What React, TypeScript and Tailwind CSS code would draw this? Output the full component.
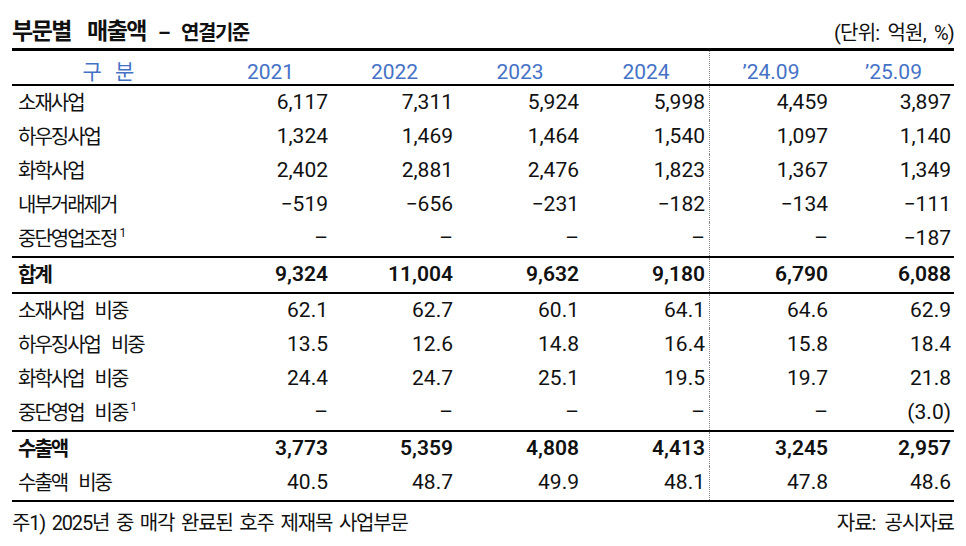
import React from "react";

type Row = {
  label: string;
  sup?: boolean;
  values: string[];
  bold?: boolean;
  topLine?: boolean;
};

const years = ["2021", "2022", "2023", "2024", "\u201924.09", "\u201925.09"];

const rows: Row[] = [
  { label: "소재사업", values: ["6,117", "7,311", "5,924", "5,998", "4,459", "3,897"] },
  { label: "하우징사업", values: ["1,324", "1,469", "1,464", "1,540", "1,097", "1,140"] },
  { label: "화학사업", values: ["2,402", "2,881", "2,476", "1,823", "1,367", "1,349"] },
  { label: "내부거래제거", values: ["\u2212519", "\u2212656", "\u2212231", "\u2212182", "\u2212134", "\u2212111"] },
  { label: "중단영업조정", sup: true, values: ["\u2013", "\u2013", "\u2013", "\u2013", "\u2013", "\u2212187"] },
  { label: "합계", bold: true, topLine: true, values: ["9,324", "11,004", "9,632", "9,180", "6,790", "6,088"] },
  { label: "소재사업 비중", topLine: true, values: ["62.1", "62.7", "60.1", "64.1", "64.6", "62.9"] },
  { label: "하우징사업 비중", values: ["13.5", "12.6", "14.8", "16.4", "15.8", "18.4"] },
  { label: "화학사업 비중", values: ["24.4", "24.7", "25.1", "19.5", "19.7", "21.8"] },
  { label: "중단영업 비중", sup: true, values: ["\u2013", "\u2013", "\u2013", "\u2013", "\u2013", "(3.0)"] },
  { label: "수출액", bold: true, topLine: true, values: ["3,773", "5,359", "4,808", "4,413", "3,245", "2,957"] },
  { label: "수출액 비중", values: ["40.5", "48.7", "49.9", "48.1", "47.8", "48.6"] },
];

const font = "font-['Roboto','Noto_Sans_CJK_KR',sans-serif]";
const grid = "grid grid-cols-[197px_123px_125px_126px_126px_123px_123px]";

function Cell({ i, children, className = "" }: { i: number; children: React.ReactNode; className?: string }) {
  return (
    <div
      className={`flex items-center justify-end pr-[4px] ${
        i === 4 ? "border-l border-dotted border-[#8a8a8a]" : ""
      } ${className}`}
    >
      {children}
    </div>
  );
}

export default function App() {
  return (
    <div className={`w-[966px] h-[546px] bg-white text-[#111] ${font}`}>
      <div className="px-[12px] pt-[14px]">
        <div className="flex items-end justify-between h-[34px]">
          <div className="flex items-end font-bold tracking-[-1.5px] pb-[5px]">
            <span className="text-[23px] leading-none">부문별</span>
            <span className="text-[23px] leading-none ml-[16px]">매출액</span>
            <span className="text-[20px] leading-none ml-[12px]">–</span>
            <span className="text-[20px] leading-none ml-[12px]">연결기준</span>
          </div>
          <div className="text-[20px] leading-none tracking-[-0.8px] [word-spacing:4px] pb-[5px]">(단위: 억원, %)</div>
        </div>

        <div className="border-t-[3px] border-black">
          <div className={`${grid} h-[35px] border-b-2 border-black text-[#4672c6] text-[21px]`}>
            <div className="flex items-end justify-center pb-[1px] leading-none tracking-[4px] text-[21px]">구 분</div>
            {years.map((y, i) => (
              <div
                key={y}
                className={`flex items-end justify-center pb-[1px] leading-none ${
                  i === 4 ? "border-l border-dotted border-[#8a8a8a]" : ""
                }`}
              >
                {y}
              </div>
            ))}
          </div>

          {rows.map((r) => (
            <div
              key={r.label}
              className={`${grid} ${r.topLine ? "h-[36px] border-t-2 border-black" : "h-[34px]"}`}
            >
              <div
                className={`flex items-center pl-[6px] text-[20px] tracking-[-2px] [word-spacing:8px] ${
                  r.bold ? "font-bold" : ""
                }`}
              >
                {r.label}
                {r.sup && <sup className="text-[12px] ml-[3px] -top-[6px] tracking-normal">1</sup>}
              </div>
              {r.values.map((v, i) => (
                <Cell key={i} i={i} className={`text-[21px] ${r.bold ? "font-semibold" : ""}`}>
                  {v}
                </Cell>
              ))}
            </div>
          ))}

          <div className="border-t-2 border-black" />
        </div>

        <div className="flex justify-between items-center h-[42px] text-[20px]">
          <span className="tracking-[-1.2px] [word-spacing:3px]">주1) 2025년 중 매각 완료된 호주 제재목 사업부문</span>
          <span className="tracking-[-1px] [word-spacing:5px]">자료: 공시자료</span>
        </div>
      </div>
    </div>
  );
}
